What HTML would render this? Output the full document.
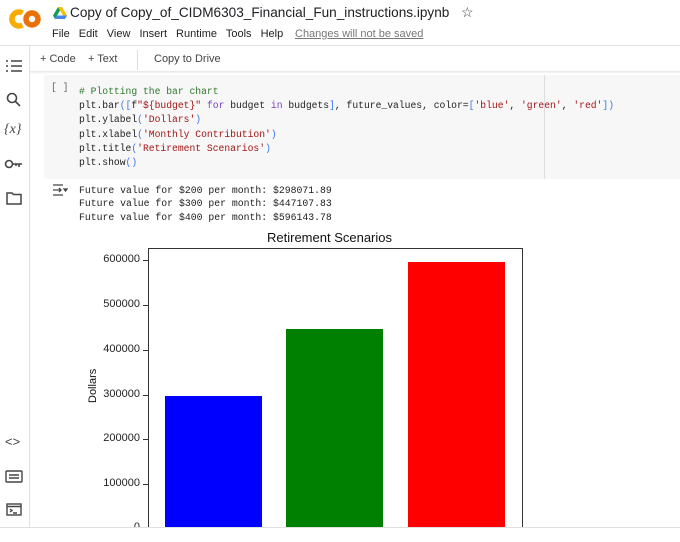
<!DOCTYPE html>
<html><head><style>
*{margin:0;padding:0;box-sizing:border-box}
html,body{width:680px;height:542px;overflow:hidden}
body{background:#fff;font-family:"Liberation Sans",sans-serif;position:relative;color:#202124}
.a{position:absolute}
.code{font-family:"Liberation Mono",monospace;font-size:9.7px;line-height:14.2px;white-space:pre;color:#202124}
.s{color:#a31515}.k{color:#7f3fbf}.p{color:#3b78e7}.c{color:#2f7a2f}
.tk{position:absolute;left:90px;width:50px;text-align:right;font-size:11px;color:#222}
.tm{position:absolute;left:143px;width:5px;height:1px;background:#333}
</style></head><body>
<svg class="a" style="left:8px;top:7px" width="34" height="24" viewBox="0 0 34 24">
<path d="M14.5 6 A7 7 0 1 0 14.5 18" stroke="#f9ab00" stroke-width="5.5" fill="none"/>
<circle cx="24" cy="12" r="6" stroke="#e8710a" stroke-width="5.5" fill="none"/>
</svg>
<svg class="a" style="left:53px;top:7px" width="14" height="12" viewBox="0 0 14 12">
<path d="M5 0h4l5 8.5h-4z" fill="#fbbc04"/><path d="M5 0L0 8.5l2 3.5 5-8.5z" fill="#0f9d58"/><path d="M2 12h10l2-3.5H4z" fill="#4285f4"/></svg>
<div class="a" style="left:70px;top:5px;font-size:13.6px;color:#202124">Copy of Copy_of_CIDM6303_Financial_Fun_instructions.ipynb</div>
<div class="a" style="left:461px;top:4px;font-size:14px;color:#444">☆</div>
<div class="a" style="left:52px;top:28px;font-size:11px;word-spacing:6px">File Edit View Insert Runtime Tools Help</div>
<div class="a" style="left:295px;top:28px;font-size:11px;color:#777;text-decoration:underline">Changes will not be saved</div>
<div class="a" style="left:0;top:45px;width:680px;height:1px;background:#e0e0e0"></div>
<div class="a" style="left:40px;top:53px;font-size:11px;color:#444">+ Code&nbsp;&nbsp;&nbsp; + Text</div>
<div class="a" style="left:137px;top:50px;width:1px;height:20px;background:#ddd"></div>
<div class="a" style="left:154px;top:53px;font-size:11px;color:#444">Copy to Drive</div>
<div class="a" style="left:29px;top:71px;width:651px;height:3px;background:linear-gradient(#e6e6e6,#fff)"></div>
<div class="a" style="left:29px;top:46px;width:1px;height:482px;background:#e0e0e0"></div>
<svg class="a" style="left:5px;top:58px" width="18" height="16" viewBox="0 0 18 16" stroke="#444" stroke-width="1.6"><path d="M1 3h2M6 3h11M1 8h2M6 8h11M1 13h2M6 13h11"/></svg>
<svg class="a" style="left:6px;top:92px" width="16" height="16" viewBox="0 0 16 16" stroke="#444" stroke-width="1.6" fill="none"><circle cx="6" cy="6" r="4.5"/><path d="M9.5 9.5L14 14"/></svg>
<div class="a" style="left:4px;top:122px;font-size:14px;font-family:'Liberation Serif',serif;font-style:italic;color:#444">{<i>x</i>}</div>
<svg class="a" style="left:4px;top:158px" width="20" height="12" viewBox="0 0 20 12" stroke="#444" stroke-width="1.6" fill="none"><circle cx="5" cy="6" r="3.5"/><path d="M8.5 6H18M15 6v3M12 6v2"/></svg>
<svg class="a" style="left:6px;top:191px" width="16" height="14" viewBox="0 0 16 14" stroke="#444" stroke-width="1.5" fill="none"><path d="M1 2h5l1.5 1.5H15V13H1z"/></svg>
<div class="a" style="left:5px;top:434px;font-size:13px;color:#444">&lt;&gt;</div>
<svg class="a" style="left:5px;top:470px" width="18" height="13" viewBox="0 0 18 13" stroke="#444" stroke-width="1.4" fill="none"><rect x="1" y="1" width="16" height="11" rx="1"/><path d="M4 5h10M4 8h10"/></svg>
<svg class="a" style="left:6px;top:503px" width="16" height="13" viewBox="0 0 16 13" stroke="#444" stroke-width="1.4" fill="none"><rect x="1" y="1" width="14" height="11"/><path d="M1 3.5h14M4 6l2 1.5L4 9M7 10h4"/></svg>
<div class="a" style="left:44px;top:75px;width:636px;height:104px;background:#f7f7f7"></div>
<div class="a" style="left:544px;top:75px;width:1px;height:104px;background:#ddd"></div>
<div class="a code" style="left:51px;top:81px;color:#666">[ ]</div>
<div class="a code" style="left:79px;top:85px"><span class="c"># Plotting the bar chart</span>
plt.bar<span class="p">([</span>f<span class="s">"${budget}"</span> <span class="k">for</span> budget <span class="k">in</span> budgets<span class="p">]</span>, future_values, color=<span class="p">[</span><span class="s">'blue'</span>, <span class="s">'green'</span>, <span class="s">'red'</span><span class="p">])</span>
plt.ylabel<span class="p">(</span><span class="s">'Dollars'</span><span class="p">)</span>
plt.xlabel<span class="p">(</span><span class="s">'Monthly Contribution'</span><span class="p">)</span>
plt.title<span class="p">(</span><span class="s">'Retirement Scenarios'</span><span class="p">)</span>
plt.show<span class="p">()</span></div>
<svg class="a" style="left:52px;top:184px" width="16" height="12" viewBox="0 0 16 12" stroke="#444" stroke-width="1.3" fill="none"><path d="M1 1h10M1 11h10M1 6h8M7 4l2 2-2 2"/><path d="M12 5h3l-1.5 2z" fill="#444"/></svg>
<div class="a code" style="left:79px;top:184px;line-height:13.3px;font-size:9.8px">Future value for $200 per month: $298071.89
Future value for $300 per month: $447107.83
Future value for $400 per month: $596143.78</div>
<div class="a" style="left:267px;top:230px;font-size:13px;color:#111">Retirement Scenarios</div>
<div class="a" style="left:148px;top:248px;width:375px;height:290px;border:1px solid #333;border-bottom:none"></div>
<div class="a" style="left:165px;top:396px;width:97px;height:140px;background:#00f"></div>
<div class="a" style="left:286px;top:329px;width:97px;height:210px;background:#008000"></div>
<div class="a" style="left:408px;top:262px;width:97px;height:276px;background:#f00"></div>
<div class="tk" style="top:253px">600000</div><div class="tm" style="top:260px"></div>
<div class="tk" style="top:298px">500000</div><div class="tm" style="top:305px"></div>
<div class="tk" style="top:343px">400000</div><div class="tm" style="top:350px"></div>
<div class="tk" style="top:388px">300000</div><div class="tm" style="top:395px"></div>
<div class="tk" style="top:432px">200000</div><div class="tm" style="top:439px"></div>
<div class="tk" style="top:477px">100000</div><div class="tm" style="top:484px"></div>
<div class="tk" style="top:521px">0</div>
<div class="a" style="left:78px;top:382px;font-size:11px;transform:rotate(-90deg);transform-origin:center;width:30px;text-align:center;color:#111">Dollars</div>
<div class="a" style="left:0;top:527px;width:680px;height:15px;background:#fff;border-top:1px solid #e0e0e0"></div>
</body></html>
